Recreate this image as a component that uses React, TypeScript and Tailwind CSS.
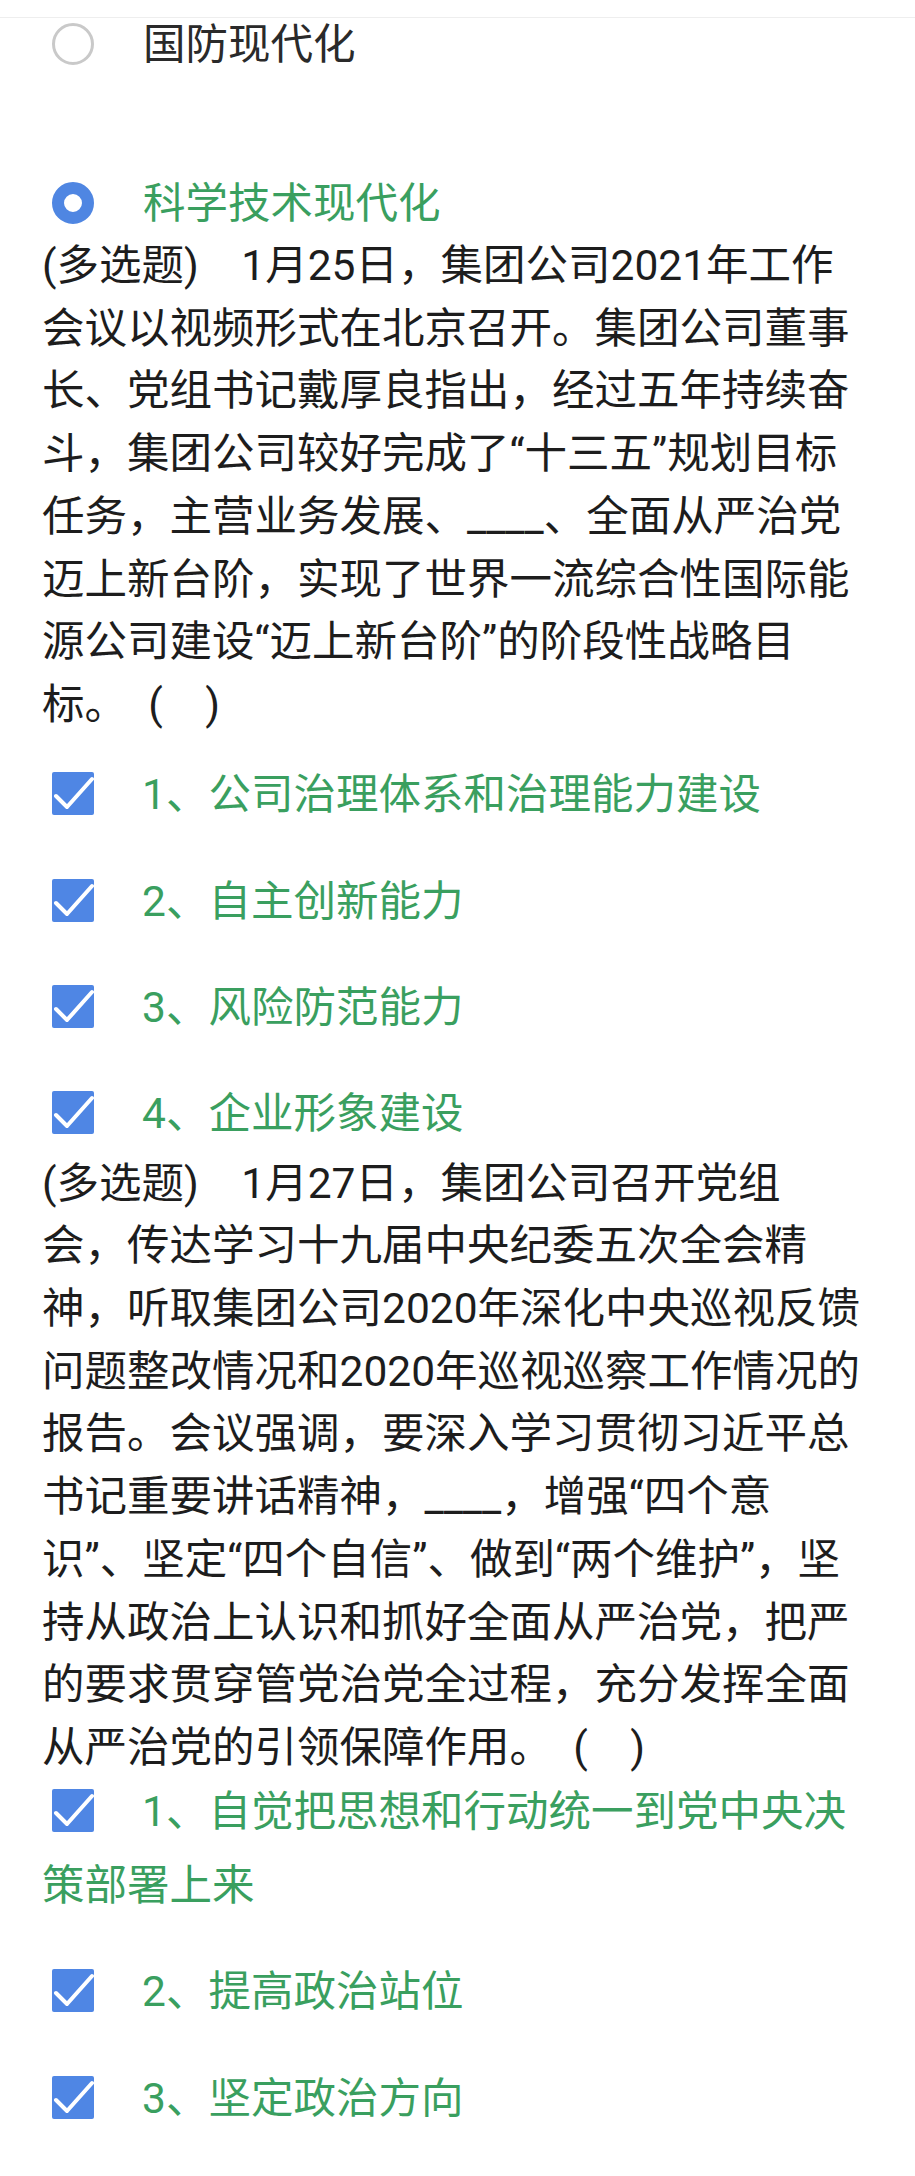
import React from "react";

const q1Lines = [
  "(多选题)\u30001月25日，集团公司2021年工作",
  "会议以视频形式在北京召开。集团公司董事",
  "长、党组书记戴厚良指出，经过五年持续奋",
  "斗，集团公司较好完成了“十三五”规划目标",
  "任务，主营业务发展、____、全面从严治党",
  "迈上新台阶，实现了世界一流综合性国际能",
  "源公司建设“迈上新台阶”的阶段性战略目",
  "标。\u3000(\u3000)",
];

const q2Lines = [
  "(多选题)\u30001月27日，集团公司召开党组",
  "会，传达学习十九届中央纪委五次全会精",
  "神，听取集团公司2020年深化中央巡视反馈",
  "问题整改情况和2020年巡视巡察工作情况的",
  "报告。会议强调，要深入学习贯彻习近平总",
  "书记重要讲话精神，____，增强“四个意",
  "识”、坚定“四个自信”、做到“两个维护”，坚",
  "持从政治上认识和抓好全面从严治党，把严",
  "的要求贯穿管党治党全过程，充分发挥全面",
  "从严治党的引领保障作用。\u3000(\u3000)",
];

const Radio = ({ on }: { on?: boolean }) =>
  on ? (
    <span className="inline-block w-[42px] h-[42px] rounded-full border-[12px] border-[#4f86e2] bg-white align-[-6px] ml-[10px] mr-[49px]" />
  ) : (
    <span className="inline-block w-[42px] h-[42px] rounded-full border-[3px] border-[#c9c9c9] bg-white align-[-6px] ml-[10px] mr-[49px]" />
  );

const CheckBox = () => (
  <svg viewBox="0 0 42 43" className="inline-block w-[42px] h-[43px] align-[-6px] ml-[10px] mr-[48px]">
    <rect width="42" height="43" rx="2" fill="#4f86e4" />
    <path
      d="M4 24 L15 35 L40 7"
      fill="none"
      stroke="#ffffff"
      strokeWidth="4"
      strokeLinecap="round"
      strokeLinejoin="round"
    />
  </svg>
);

const Question = ({ lines }: { lines: string[] }) => (
  <div className="leading-[62.7px] text-[#1d1d1d] whitespace-nowrap">
    {lines.map((l) => (
      <div key={l}>{l}</div>
    ))}
  </div>
);

export default function App() {
  return (
    <div className="min-h-[2176px] w-[915px] bg-white font-['Roboto','Noto_Sans_CJK_SC',sans-serif] text-[42.5px]">
      <div className="h-[18px] border-b border-[#eeeeee]" />
      <div className="px-[42px]">
        <div className="leading-[54px] text-[#2a2a2a]">
          <Radio />
          国防现代化
        </div>
        <div className="mt-[101px] leading-[62px] text-[#3a9f5f]">
          <Radio on />
          科学技术现代化
        </div>

        <Question lines={q1Lines} />

        <div className="mt-[21px] leading-[74px] text-[#3a9f5f]">
          <CheckBox />
          1、公司治理体系和治理能力建设
        </div>
        <div className="mt-[33px] leading-[74px] text-[#3a9f5f]">
          <CheckBox />
          2、自主创新能力
        </div>
        <div className="mt-[32px] leading-[74px] text-[#3a9f5f]">
          <CheckBox />
          3、风险防范能力
        </div>
        <div className="mt-[32px] leading-[74px] text-[#3a9f5f]">
          <CheckBox />
          4、企业形象建设
        </div>

        <div className="mt-[2px]">
          <Question lines={q2Lines} />
        </div>

        <div className="-mt-[5px] leading-[74px] text-[#3a9f5f] whitespace-nowrap">
          <CheckBox />
          1、自觉把思想和行动统一到党中央决
          <br />
          策部署上来
        </div>
        <div className="mt-[32px] leading-[74px] text-[#3a9f5f]">
          <CheckBox />
          2、提高政治站位
        </div>
        <div className="mt-[33px] leading-[74px] text-[#3a9f5f]">
          <CheckBox />
          3、坚定政治方向
        </div>
      </div>
    </div>
  );
}
